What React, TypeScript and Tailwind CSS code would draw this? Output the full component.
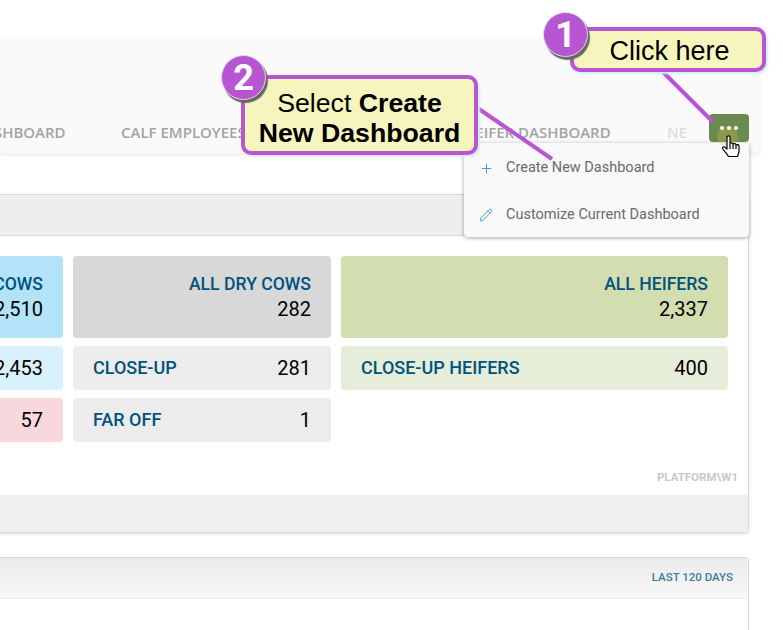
import React from "react";
import { Pencil, Plus } from "lucide-react";

function BigCard({ label, value, className }: { label: string; value: string; className: string }) {
  return (
    <div className={`h-[82px] rounded-[4px] pt-[17px] pr-[20px] text-right ${className}`}>
      <div className="text-[17.6px] leading-[22px] font-medium text-[#00527f]">{label}</div>
      <div className="text-[20px] leading-[28px] text-black">{value}</div>
    </div>
  );
}

function RowCard({ label, value, className }: { label?: string; value?: string; className: string }) {
  return (
    <div className={`flex h-[44px] items-center justify-between rounded-[4px] pl-[20px] pr-[20px] ${className}`}>
      <span className="mb-[2px] text-[18px] font-medium text-[#00527f]">{label}</span>
      <span className="text-[20px] text-black">{value}</span>
    </div>
  );
}

function Step({ n, className }: { n: string; className: string }) {
  return (
    <div className={`absolute flex h-[45px] w-[45px] items-center justify-center rounded-full border border-[#ddd] bg-[#b855d3] text-[36px] font-bold text-white shadow-[2px_3px_1px_#666] ${className}`}>
      {n}
    </div>
  );
}

function Hand() {
  return (
    <svg className="absolute left-[722px] top-[135px]" width="19" height="23" viewBox="0 0 19 23" fill="#fff" stroke="#000" strokeWidth="1.2" strokeLinejoin="round">
      <path d="M5 2c0-1.500 3-1.500 3 0v6.500c0-1 3-1 3 .2v.6c0-1 3-1 3 .2v.8c0-1 3-.8 3 .5V16c0 2-1 3-1.500 5.500H6.500C5.500 19 .5 14.500 .5 13c0-1.300 1.500-1.700 2.500-.7L5 14Z" />
      <path d="M8 9v5M11 9.500V14M14 10.500V14" fill="none" />
    </svg>
  );
}

export default function App() {
  return (
    <div className="relative h-[630px] w-[783px] overflow-hidden bg-white font-['Roboto',sans-serif]">
      <div className="h-[38px]" />

      {/* tab bar */}
      <div className="flex h-[115px] w-[759px] items-end overflow-hidden bg-[#fafafa] pb-[10px] font-['Open_Sans',sans-serif] text-[15px] font-semibold text-[#a3a3a3] shadow-[0_2px_5px_rgba(0,0,0,0.08)]">
        <span className="ml-[-27px] w-[89px] shrink-0 whitespace-nowrap">DASHBOARD</span>
        <span className="ml-[59px] w-[125px] shrink-0 whitespace-nowrap">CALF EMPLOYEES</span>
        <span className="ml-[218px] w-[156px] shrink-0 whitespace-nowrap">HEIFER DASHBOARD</span>
        <span className="ml-[47px] w-[20px] shrink-0 overflow-hidden whitespace-nowrap text-[#dedede]">NEW</span>
      </div>

      {/* summary panel */}
      <div className="ml-[-205px] mt-[41px] w-[954px] overflow-hidden rounded-[4px] border border-[#d9d9d9] shadow-[0_1px_3px_rgba(0,0,0,0.15)]">
        <div className="h-[41px] border-b border-[#d9d9d9] bg-[#eeeeee]" />
        <div className="relative h-[259px] bg-white pl-[9px] pt-[20px]">
          <div className="flex gap-[10px]">
            <div className="flex w-[258px] flex-col gap-[8px]">
              <BigCard label="ALL MILKING COWS" value="2,510" className="bg-[#b3e3f9]" />
              <RowCard value="2,453" className="bg-[#d9f1fc]" />
              <RowCard value="57" className="bg-[#f8d8dd]" />
            </div>
            <div className="flex w-[258px] flex-col gap-[8px]">
              <BigCard label="ALL DRY COWS" value="282" className="bg-[#d8d8d8]" />
              <RowCard label="CLOSE-UP" value="281" className="bg-[#ececec]" />
              <RowCard label="FAR OFF" value="1" className="bg-[#ececec]" />
            </div>
            <div className="flex w-[387px] flex-col gap-[8px]">
              <BigCard label="ALL HEIFERS" value="2,337" className="bg-[#d2ddb0]" />
              <RowCard label="CLOSE-UP HEIFERS" value="400" className="bg-[#e6edd8]" />
            </div>
          </div>
          <div className="absolute bottom-[9px] right-[10px] text-[11.5px] font-bold text-[#c8c8c8]">PLATFORM\W1</div>
        </div>
        <div className="h-[37px] bg-[#f0f0f0]" />
      </div>

      {/* second panel */}
      <div className="ml-[-205px] mt-[24px] h-[80px] w-[954px] rounded-t-[4px] border border-b-0 border-[#d9d9d9]">
        <div className="flex h-[41px] items-center justify-end border-b border-[#eeeeee] bg-gradient-to-b from-[#ececec] to-[#f8f8f8] pr-[15px] text-[11.5px] font-medium text-[#3f7a9c]">
          LAST 120 DAYS
        </div>
      </div>

      {/* dropdown menu */}
      <div className="absolute left-[464px] top-[143px] h-[94px] w-[285px] rounded-b-[4px] bg-[#f9f9f9] pt-[11px] text-[14.5px] text-[#6a6a6a] shadow-[0_1px_4px_rgba(0,0,0,0.35)]">
        <div className="flex h-[28px] items-center gap-[12px] pl-[15px]">
          <Plus size={15} strokeWidth={1.5} className="text-[#3f9ad6]" />
          <span>Create New Dashboard</span>
        </div>
        <div className="mt-[19px] flex h-[28px] items-center gap-[13px] pl-[15px]">
          <Pencil size={14} strokeWidth={1.6} className="text-[#3f9ad6]" />
          <span>Customize Current Dashboard</span>
        </div>
      </div>

      {/* more button */}
      <div className="absolute left-[709px] top-[114px] h-[28px] w-[40px] rounded-[4px] bg-[#6a8a4f]" />
      <div className="absolute left-[717px] top-[126px] h-[21px] w-[21px] rounded-full bg-[#d8c040]/30" />
      <div className="absolute left-[709px] top-[114px] flex h-[28px] w-[40px] items-center justify-center gap-[3px]">
        <span className="h-[4px] w-[4px] rounded-full bg-white" />
        <span className="h-[4px] w-[4px] rounded-full bg-white" />
        <span className="h-[4px] w-[4px] rounded-full bg-white" />
      </div>
      <Hand />

      {/* annotations */}
      <svg className="absolute left-0 top-0" width="783" height="630" fill="none" stroke="#b855d3" strokeWidth="4">
        <path d="M663 72 713 122" />
        <path d="M476 107 552 159" />
      </svg>
      <div className="absolute left-[570px] top-[27px] flex h-[45px] w-[196px] items-center justify-center rounded-[10px] border-[4px] border-[#b855d3] bg-[#f7f5be] pl-[3px] pt-[3px] font-['Liberation_Sans',sans-serif] text-[27px] text-black shadow-[2px_2px_2px_#d4eefb]">
        Click here
      </div>
      <Step n="1" className="left-[543px] top-[12px]" />
      <div className="absolute left-[241px] top-[75px] h-[80px] w-[237px] rounded-[10px] border-[4px] border-[#b855d3] bg-[#f7f5be] pt-[9px] text-center font-['Liberation_Sans',sans-serif] text-[26.7px] leading-[30px] text-black shadow-[2px_2px_2px_#d4eefb]">
        Select <b>Create</b>
        <br />
        <b>New Dashboard</b>
      </div>
      <Step n="2" className="left-[221px] top-[55px]" />
    </div>
  );
}
